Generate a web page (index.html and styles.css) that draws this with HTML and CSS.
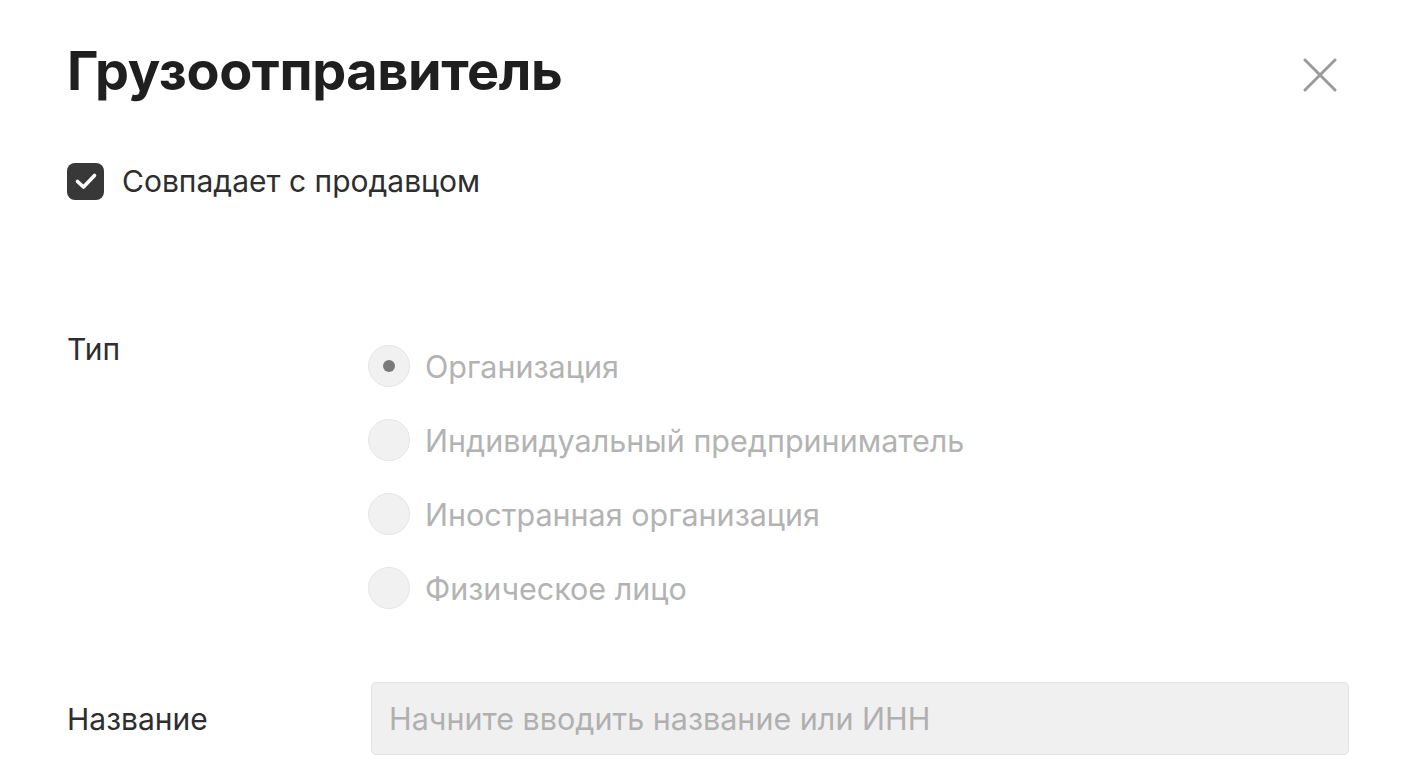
FILE: index.html
```html
<!DOCTYPE html>
<html lang="ru">
<head>
    <meta charset="UTF-8">
    <meta name="viewport" content="width=device-width, initial-scale=1.0">
    <title>Грузоотправитель</title>
    <link rel="stylesheet" href="styles.css">
</head>
<body>

<div class="modal">
    <!-- Header -->
    <div class="modal-header">
        <h1>Грузоотправитель</h1>
        <button class="close-btn" aria-label="Закрыть">
            <svg width="34" height="34" viewBox="0 0 34 34">
                <path d="M2 2 L32 32 M32 2 L2 32" stroke="#9b9b9b" stroke-width="3" stroke-linecap="round" fill="none"/>
            </svg>
        </button>
    </div>

    <!-- Same as seller -->
    <label class="check">
        <span class="check-box">
            <svg width="26" height="26" viewBox="0 0 26 26">
                <path d="M4.5 13.5 L10.5 19 L21.5 7.5" stroke="#fff" stroke-width="3.6" stroke-linecap="round" stroke-linejoin="round" fill="none"/>
            </svg>
        </span>
        Совпадает с продавцом
    </label>

    <!-- Type -->
    <div class="field field-type">
        <div class="field-label">Тип</div>
        <div class="radios">
            <div class="radio checked"><span class="radio-circle"></span>Организация</div>
            <div class="radio"><span class="radio-circle"></span>Индивидуальный предприниматель</div>
            <div class="radio"><span class="radio-circle"></span>Иностранная организация</div>
            <div class="radio"><span class="radio-circle"></span>Физическое лицо</div>
        </div>
    </div>

    <!-- Name -->
    <div class="field field-name">
        <div class="field-label">Название</div>
        <input type="text" class="text-input" placeholder="Начните вводить название или ИНН" disabled>
    </div>
</div>

</body>
</html>
```

FILE: styles.css
```css
body {
    margin: 0;
    background-color: #fff;
    font-family: Inter, "Noto Sans", sans-serif;
    color: #333;
}
.modal {
    padding: 30px 69px 0 67px;
}
.modal-header {
    display: flex;
    justify-content: space-between;
    align-items: center;
    height: 80px;
}
h1 {
    margin: 0;
    font-size: 54px;
    font-weight: 700;
    color: #1f1f1f;
    letter-spacing: -0.4px;
}
.close-btn {
    background: none;
    border: none;
    padding: 0;
    margin-right: 12px;
    margin-top: 10px;
    cursor: pointer;
    display: flex;
}
.check {
    display: flex;
    align-items: center;
    gap: 18px;
    margin-top: 52px;
    height: 38px;
    font-size: 30px;
    color: #2e2e2e;
}
.check-box {
    width: 37px;
    height: 37px;
    border-radius: 8px;
    background-color: #383838;
    display: flex;
    align-items: center;
    justify-content: center;
}
.field {
    display: grid;
    grid-template-columns: 304px 1fr;
}
.field-label {
    font-size: 30px;
    color: #2e2e2e;
    line-height: 36px;
}
.field-type {
    margin-top: 131px;
}
.radios {
    display: flex;
    flex-direction: column;
    gap: 32px;
    padding-top: 14px;
    margin-left: -3px;
}
.radio {
    display: flex;
    align-items: center;
    gap: 15px;
    height: 42px;
    font-size: 30.5px;
    color: #b3b3b3;
}
.radio-circle {
    width: 40px;
    height: 40px;
    border-radius: 50%;
    background-color: #f1f1f1;
    border: 1px solid #e6e6e6;
    display: flex;
    align-items: center;
    justify-content: center;
}
.radio.checked .radio-circle::after {
    content: "";
    width: 12px;
    height: 12px;
    border-radius: 50%;
    background-color: #7a7a7a;
}
.field-name {
    margin-top: 73px;
    align-items: center;
}
.text-input {
    height: 73px;
    box-sizing: border-box;
    padding: 0 17px;
    font-family: Inter, "Noto Sans", sans-serif;
    font-size: 30.5px;
    background-color: #f0f0f0;
    border: 1px solid #e2e2e2;
    border-radius: 5px;
}
.text-input::placeholder {
    color: #b0b0b0;
}
```
